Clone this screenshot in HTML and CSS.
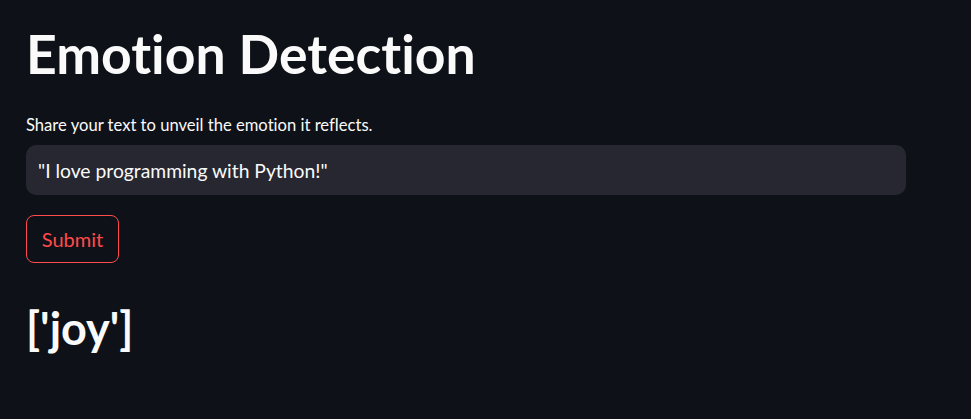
FILE: index.html
```html
<!DOCTYPE html>
<html lang="en">
<head>
<meta charset="utf-8">
<title>Emotion Detection</title>
<link rel="stylesheet" href="styles.css">
</head>
<body>
<main class="page">
  <h1 class="title">Emotion Detection</h1>
  <label class="label" for="txt">Share your text to unveil the emotion it reflects.</label>
  <div class="input" id="txt">"I love programming with Python!"</div>
  <div class="actions"><button class="btn" type="button">Submit</button></div>
  <h2 class="result">['joy']</h2>
</main>
</body>
</html>
```
FILE: styles.css
```css
html, body {
  margin: 0;
  padding: 0;
  background: #0e1117;
  color: #fafafa;
  font-family: Lato, "Noto Sans", sans-serif;
  font-variant-ligatures: none;
}
.page {
  display: flex;
  flex-direction: column;
  align-items: flex-start;
  width: 880px;
  padding: 20px 26px 0;
}
.title {
  margin: 0;
  font-size: 53.5px;
  line-height: 66px;
  font-weight: 700;
}
.label {
  margin-top: 28px;
  font-size: 16.6px;
  line-height: 22px;
}
.input {
  box-sizing: border-box;
  align-self: stretch;
  margin-top: 9px;
  height: 50px;
  background: #262730;
  border-radius: 10px;
  padding: 0 12px;
  display: flex;
  align-items: center;
  font-size: 19.3px;
}
.actions {
  margin-top: 20px;
}
.btn {
  box-sizing: border-box;
  height: 48px;
  width: 93px;
  background: transparent;
  border: 1px solid #ff4b4b;
  border-radius: 8px;
  color: #ff4b4b;
  font-family: inherit;
  font-size: 20px;
  padding: 0;
}
.result {
  margin: 38px 0 0;
  font-size: 45px;
  line-height: 54px;
  font-weight: 700;
}
```
